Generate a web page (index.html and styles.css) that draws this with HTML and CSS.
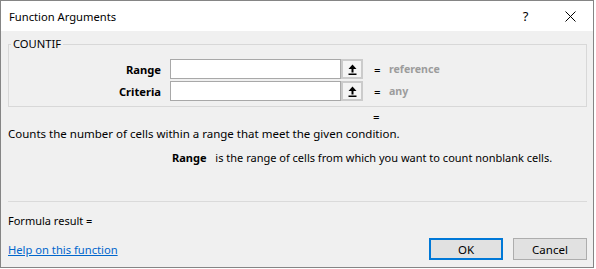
FILE: index.html
```html
<!DOCTYPE html>
<html lang="en">
<head>
    <meta charset="UTF-8">
    <meta name="viewport" content="width=device-width, initial-scale=1.0">
    <title>Function Arguments</title>
    <link rel="stylesheet" href="styles.css">
</head>
<body>

    <div class="dialog">

        <!-- Title bar -->
        <div class="title-bar">
            <span class="title">Function Arguments</span>
            <div class="title-buttons">
                <span class="title-btn">?</span>
                <span class="title-btn">
                    <svg width="11" height="11" viewBox="0 0 11 11">
                        <path d="M0.5 0.5 L10.5 10.5 M10.5 0.5 L0.5 10.5" stroke="#000" stroke-width="1" fill="none"/>
                    </svg>
                </span>
            </div>
        </div>

        <div class="content">

            <fieldset class="group-box">
                <legend>COUNTIF</legend>
                <div class="arg-rows">
                    <div class="arg-row">
                        <label class="arg-label">Range</label>
                        <input class="arg-input" type="text">
                        <span class="collapse-btn">
                            <svg width="9" height="11" viewBox="0 0 9 11">
                                <path d="M4.5 0.5 L8.5 5 H5.5 V8.5 H3.5 V5 H0.5 Z" fill="#000"/>
                                <rect x="0.5" y="9.5" width="8" height="1.5" fill="#000"/>
                            </svg>
                        </span>
                        <span class="arg-eq">=</span>
                        <span class="arg-value">reference</span>
                    </div>
                    <div class="arg-row">
                        <label class="arg-label">Criteria</label>
                        <input class="arg-input" type="text">
                        <span class="collapse-btn">
                            <svg width="9" height="11" viewBox="0 0 9 11">
                                <path d="M4.5 0.5 L8.5 5 H5.5 V8.5 H3.5 V5 H0.5 Z" fill="#000"/>
                                <rect x="0.5" y="9.5" width="8" height="1.5" fill="#000"/>
                            </svg>
                        </span>
                        <span class="arg-eq">=</span>
                        <span class="arg-value">any</span>
                    </div>
                </div>
            </fieldset>

            <div class="result-eq">=</div>
            <div class="description">Counts the number of cells within a range that meet the given condition.</div>
            <div class="arg-help">
                <span class="arg-help-name">Range</span>
                <span>is the range of cells from which you want to count nonblank cells.</span>
            </div>

            <div class="separator"></div>

            <div class="formula-result">Formula result =</div>

            <div class="footer">
                <a href="#" class="help-link">Help on this function</a>
                <div class="footer-buttons">
                    <button class="btn btn-default">OK</button>
                    <button class="btn">Cancel</button>
                </div>
            </div>

        </div>
    </div>

</body>
</html>
```

FILE: styles.css
```css
body {
    margin: 0;
    background: #ffffff;
    font-family: "Segoe UI", "Noto Sans", sans-serif;
    font-size: 11.5px;
    color: #000;
}

.dialog {
    width: 594px;
    height: 268px;
    box-sizing: border-box;
    border: 1px solid #858585;
    background: #f0f0f0;
    display: flex;
    flex-direction: column;
}

/* Title bar */
.title-bar {
    height: 30px;
    background: #fff;
    display: flex;
    align-items: center;
    justify-content: space-between;
}

.title {
    padding-left: 8px;
    font-size: 11.2px;
}

.title-buttons {
    display: flex;
    height: 30px;
}

.title-btn {
    width: 45px;
    display: flex;
    align-items: center;
    justify-content: center;
    font-size: 13px;
}

.content {
    padding: 5px 6px 0 7px;
}

/* Group box */
.group-box {
    margin: 0;
    padding: 0 0 5px 0;
    border: 1px solid #d8d8d8;
    min-width: 0;
}

.group-box legend {
    margin-left: 2px;
    padding: 0 2px;
    line-height: 16px;
    font-size: 11.2px;
}

.arg-rows {
    padding-top: 7px;
    display: flex;
    flex-direction: column;
    gap: 2px;
}

.arg-row {
    display: flex;
    align-items: center;
    height: 20px;
}

.arg-label {
    width: 152px;
    margin-right: 9px;
    text-align: right;
    font-weight: bold;
    font-size: 11.2px;
}

.arg-input {
    width: 171px;
    height: 20px;
    box-sizing: border-box;
    margin: 0;
    border: 1px solid #a8a8a8;
    background: #fff;
    padding: 0 3px;
}

.collapse-btn {
    width: 22px;
    height: 20px;
    box-sizing: border-box;
    border: 2px solid #cbcbcb;
    background: #f4f4f4;
    display: flex;
    align-items: center;
    justify-content: center;
}

.arg-eq {
    margin-left: 11px;
    width: 15px;
}

.arg-value {
    color: #9c9c9c;
    font-weight: bold;
    font-size: 10.6px;
}

.result-eq {
    margin: 2px 0 0 365px;
    line-height: 16px;
}

.description {
    margin-top: 1px;
    line-height: 16px;
}

.arg-help {
    margin: 8px 0 0 164px;
    line-height: 16px;
    font-size: 11px;
}

.arg-help-name {
    font-weight: bold;
    margin-right: 6px;
}

.separator {
    margin-top: 35px;
    height: 1px;
    background: #dadada;
}

.formula-result {
    margin-top: 11px;
    line-height: 16px;
    font-size: 11px;
}

.footer {
    margin-top: 9px;
    height: 22px;
    display: flex;
    align-items: center;
    justify-content: space-between;
}

.help-link {
    color: #0066cc;
    text-decoration: underline;
    font-size: 11.2px;
}

.footer-buttons {
    display: flex;
    gap: 10px;
}

.btn {
    width: 74px;
    height: 22px;
    margin: 0;
    box-sizing: border-box;
    border: 1px solid #adadad;
    background: #e1e1e1;
    font-family: inherit;
    font-size: 11.5px;
    padding: 0;
}

.btn-default {
    border: 2px solid #0078d7;
}
```
